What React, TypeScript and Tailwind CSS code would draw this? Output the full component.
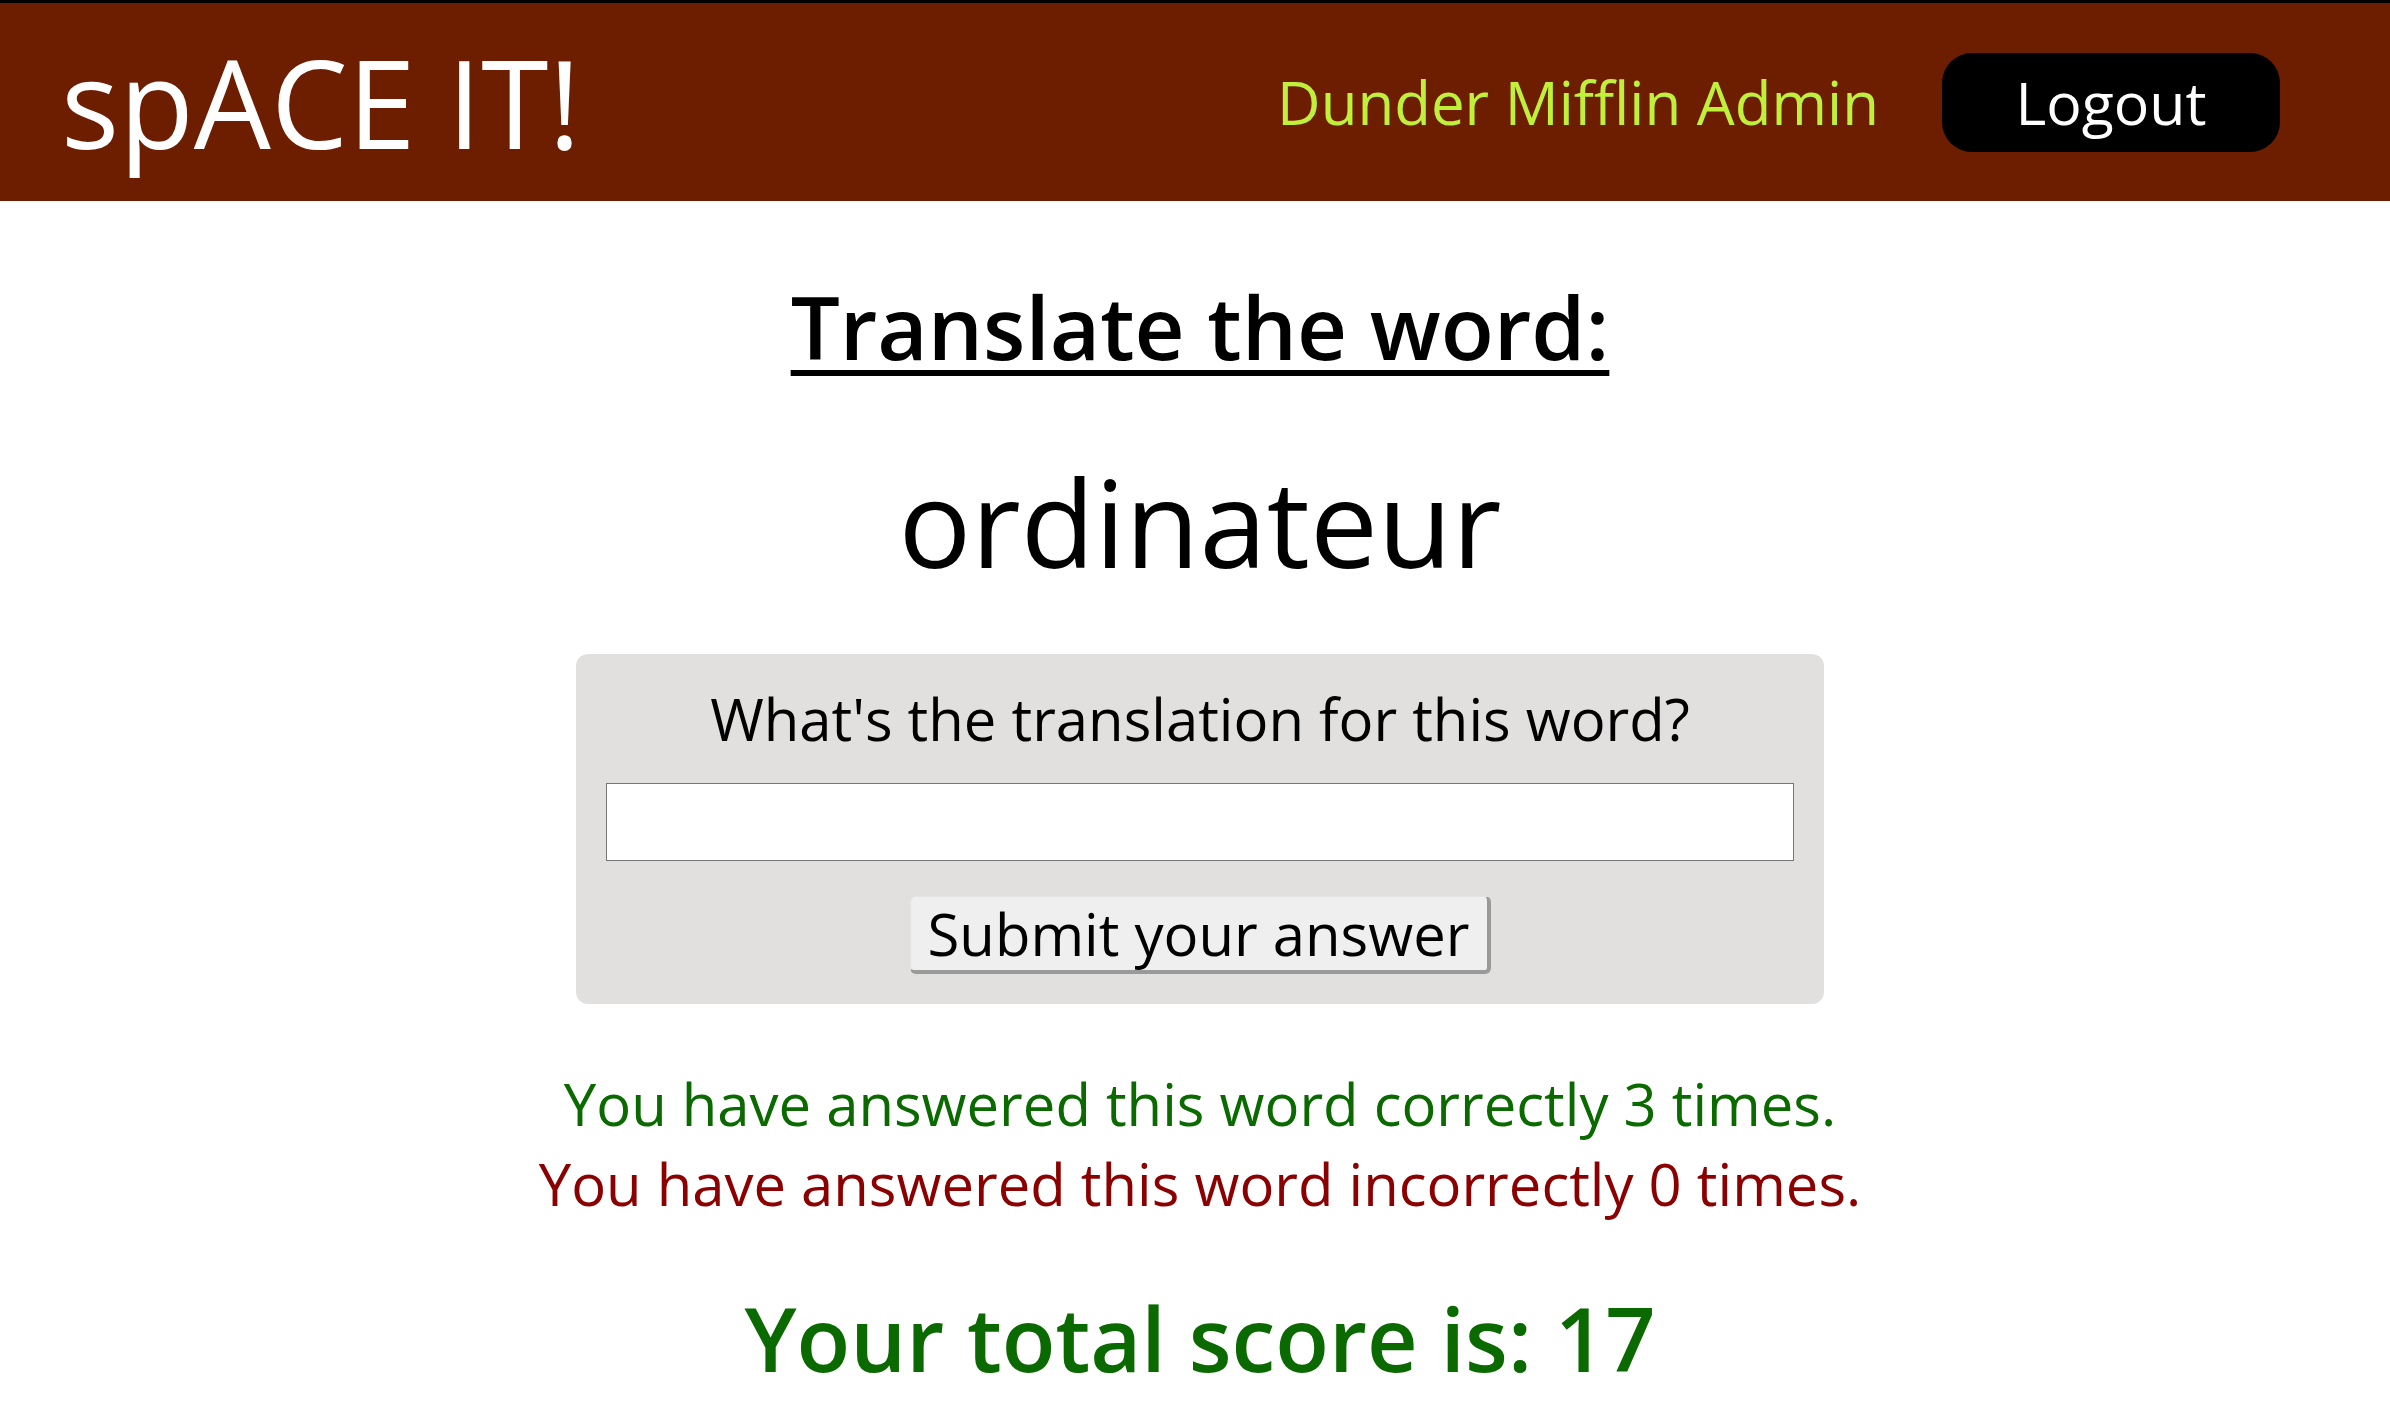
import { useState } from 'react';

const font = { fontFamily: '"Open Sans", "Noto Sans", sans-serif' };

function Header() {
    return (
        <header className="border-t-[3px] border-black bg-[#6e1e00] h-[201px] flex items-center justify-between pl-[61px] pr-[110px]">
            <h1 className="text-white text-[122px] leading-none font-medium">spACE IT!</h1>
            <div className="flex items-center gap-[63px]">
                <span className="text-[#bef03c] text-[60px] leading-none font-medium">Dunder Mifflin Admin</span>
                <button className="bg-black text-white text-[59px] leading-none w-[338px] h-[99px] rounded-[30px]">
                    Logout
                </button>
            </div>
        </header>
    );
}

export default function App() {
    const [answer, setAnswer] = useState('');

    return (
        <div style={font} className="min-h-screen bg-white text-black">
            <Header />
            <main className="flex flex-col items-center pl-[10px] pb-[40px]">
                <h2 className="mt-[82px] text-[87px] leading-none font-semibold underline decoration-[6px] underline-offset-[10px]">
                    Translate the word:
                </h2>
                <div className="mt-[91px] text-[121px] leading-none font-medium">ordinateur</div>

                <form
                    onSubmit={(e) => e.preventDefault()}
                    className="mt-[72px] w-[1248px] bg-[#e2e0df] rounded-[12px] px-[30px] pt-[36px] pb-[30px] flex flex-col items-center"
                >
                    <label className="text-[58px] leading-none">What's the translation for this word?</label>
                    <input
                        value={answer}
                        onChange={(e) => setAnswer(e.target.value)}
                        className="mt-[35px] w-full h-[78px] bg-white border border-[#767676] outline-none px-3 text-[40px]"
                    />
                    <button
                        type="submit"
                        className="mt-[35px] w-[581px] h-[78px] whitespace-nowrap bg-[#efefef] rounded-[6px] border-t border-l border-[#e4e4e4] border-r-[4px] border-b-[4px] border-r-[#9a9a9a] border-b-[#9a9a9a] text-[58px] leading-none"
                    >
                        Submit your answer
                    </button>
                </form>

                <p className="mt-[60px] text-[58px] leading-[80px] text-[#0a6a00]">You have answered this word correctly 3 times.</p>
                <p className="text-[58px] leading-[80px] text-[#8b0000]">You have answered this word incorrectly 0 times.</p>

                <p className="mt-[70px] text-[88px] leading-none font-semibold text-[#0a6a00]">Your total score is: 17</p>
            </main>
        </div>
    );
}
